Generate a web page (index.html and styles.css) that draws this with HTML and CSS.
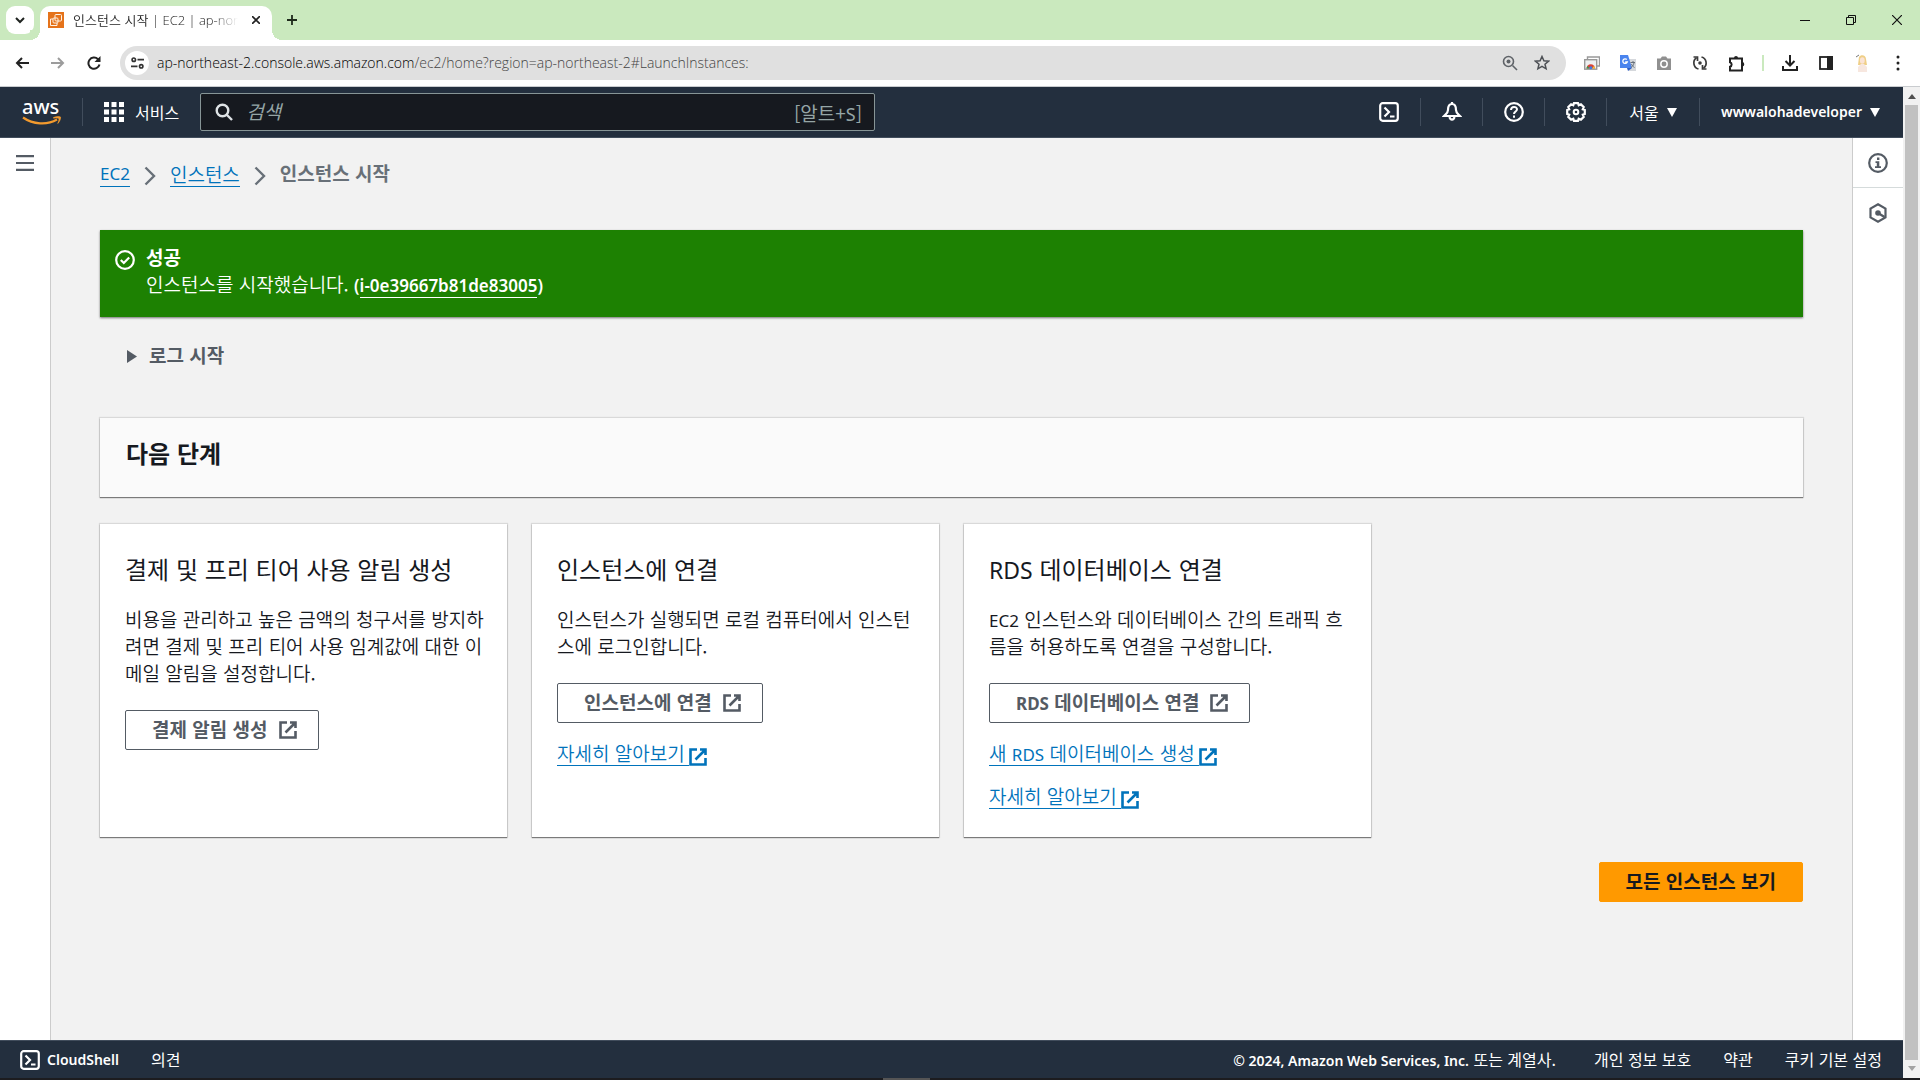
FILE: index.html
```html
<!DOCTYPE html>
<html lang="ko">
<head>
<meta charset="utf-8">
<meta name="viewport" content="width=device-width, initial-scale=1">
<title>인스턴스 시작 | EC2 | ap-northeast-2</title>
<link rel="stylesheet" href="styles.css">
</head>
<body>
<svg class="defs" width="0" height="0" aria-hidden="true">
  <symbol id="i-external" viewBox="0 0 18 18"><path d="M8 1.500H1.500v15h15V10M11 1.500h5.500V7M16 2L6.500 11.500" fill="none" stroke="currentColor" stroke-width="2.600"/></symbol>
  <symbol id="i-shell" viewBox="0 0 20 20"><rect x="1.200" y="1.200" width="17.600" height="17.600" rx="2.500" fill="none" stroke="currentColor" stroke-width="2.200"/><path d="M5.500 5.500L10 10l-4.500 4.500M11 14.500h4.500" fill="none" stroke="currentColor" stroke-width="2.200"/></symbol>
  <symbol id="i-chevron" viewBox="0 0 12 20"><path d="M1.500 1.500L10 10l-8.500 8.500" fill="none" stroke="currentColor" stroke-width="2.400"/></symbol>
  <symbol id="i-caret" viewBox="0 0 10 9"><path d="M0 0h10L5 9z" fill="currentColor"/></symbol>
</svg>

<header class="tabstrip">
  <button class="tab-search" aria-label="탭 검색"><svg width="10" height="7" viewBox="0 0 10 7"><path d="M1 1l4 4 4-4" fill="none" stroke="#1f2420" stroke-width="2"/></svg></button>
  <div class="tab">
    <svg class="favicon" width="16" height="16" viewBox="0 0 16 16"><rect width="16" height="16" fill="#e5731b"/><g fill="none" stroke="#fff3e6" stroke-width="1"><path d="M5 7H2.500v6.500H9V11"/><rect x="7" y="2.500" width="6.500" height="6.500" rx="1"/><rect x="5" y="6" width="5" height="5" rx="1"/></g></svg>
    <span class="tab-title">인스턴스 시작 <span class="tab-latin">| EC2 | ap-northeast-2</span></span>
    <button class="tab-close" aria-label="탭 닫기"><svg width="8" height="8" viewBox="0 0 8 8"><path d="M0 0l8 8M8 0L0 8" stroke="#222" stroke-width="1.600"/></svg></button>
  </div>
  <button class="tab-new" aria-label="새 탭"><svg width="10" height="10" viewBox="0 0 10 10"><path d="M5 0v10M0 5h10" stroke="#1f2b1c" stroke-width="1.800"/></svg></button>
  <div class="window-controls">
    <button aria-label="최소화"><svg width="10" height="10" viewBox="0 0 10 10"><path d="M0 5.500h10" stroke="#111"/></svg></button>
    <button aria-label="이전 크기로"><svg width="10" height="10" viewBox="0 0 10 10"><path d="M.5 2.500h7v7h-7zM2.500 2V.5h7v7H8" fill="none" stroke="#111"/></svg></button>
    <button aria-label="닫기"><svg width="10" height="10" viewBox="0 0 10 10"><path d="M0 0l10 10M10 0L0 10" stroke="#111" stroke-width="1.200"/></svg></button>
  </div>
</header>

<div class="toolbar">
  <div class="history">
    <button aria-label="뒤로"><svg width="14" height="12" viewBox="0 0 14 12"><path d="M14 6H2M7 1L2 6l5 5" fill="none" stroke="#222" stroke-width="2"/></svg></button>
    <button aria-label="앞으로"><svg width="14" height="12" viewBox="0 0 14 12"><path d="M0 6h12M7 1l5 5-5 5" fill="none" stroke="#9c9c9c" stroke-width="2"/></svg></button>
    <button aria-label="새로고침"><svg width="14" height="14" viewBox="0 0 14 14"><path d="M12.500 8.500A5.600 5.600 0 1 1 11 3.200L12.500 5" fill="none" stroke="#222" stroke-width="2"/><path d="M13.500 0v6h-6z" fill="#222"/></svg></button>
  </div>
  <div class="omnibox">
    <button class="site-info" aria-label="사이트 정보"><svg width="13" height="12" viewBox="0 0 13 12"><g fill="none" stroke="#333" stroke-width="1.700"><circle cx="2.800" cy="2.700" r="1.700"/><path d="M6.500 2.700H13M0 9.300h6.500"/><circle cx="10.200" cy="9.300" r="1.700"/></g></svg></button>
    <div class="url"><span class="host">ap-northeast-2.console.aws.amazon.com</span>/ec2/home?region=ap-northeast-2#LaunchInstances:</div>
    <button aria-label="확대/축소"><svg width="16" height="16" viewBox="0 0 16 16"><g fill="none" stroke="#5f6368" stroke-width="1.600"><circle cx="6.500" cy="6.500" r="5"/><path d="M10.500 10.500L15 15"/></g><circle cx="6.500" cy="6.500" r="2" fill="#5f6368"/></svg></button>
    <button aria-label="북마크"><svg width="16" height="16" viewBox="0 0 16 16"><path d="M8 1.500l1.900 4.300 4.700.4-3.600 3 1.100 4.600L8 11.400l-4.100 2.400L5 9.200l-3.600-3 4.700-.4z" fill="none" stroke="#4d5055" stroke-width="1.500"/></svg></button>
  </div>
  <div class="extensions">
    <button aria-label="스크린샷"><svg width="16" height="16" viewBox="0 0 16 16"><path d="M3.500 4V2h12v9H13" fill="none" stroke="#999" stroke-width="1.400"/><rect x=".7" y="4.700" width="12" height="9.500" fill="#eef0f1" stroke="#999" stroke-width="1.400"/><path d="M2.500 13.500a4.200 4.200 0 0 1 8.500 0z" fill="#d94436"/><path d="M2.500 13.500a4 4 0 0 1 1-2.500l2 2.500z" fill="#2f9e52"/><path d="M11 13.500a4 4 0 0 0-1-2.500l-2 2.500z" fill="#f4c430"/><circle cx="6.800" cy="12.700" r="1.500" fill="#3d7de4"/></svg></button>
    <button aria-label="번역"><svg width="16" height="16" viewBox="0 0 16 16"><path d="M6 4h10v12H9z" fill="#d5d8dc"/><path d="M0 0h8l4 13H0z" fill="#4a84ee"/><path d="M8 16l4-3H7z" fill="#2f5ec4"/><path d="M6.800 4.500A2.300 2.300 0 1 0 7.300 7H5.200" fill="none" stroke="#fff" stroke-width="1.300"/><path d="M10.500 7.500H15M13 6v1.500M14 8c-.5 2.500-1.500 3.500-3 4.500M11.500 9c.5 1.500 1.500 2.500 3 3.500" fill="none" stroke="#69717b" stroke-width="1"/></svg></button>
    <button aria-label="카메라"><svg width="16" height="14" viewBox="0 0 16 14"><path d="M1 2.500h3.500L6 .5h4l1.500 2H15V14H1z" fill="#909090"/><circle cx="8" cy="8" r="3.200" fill="#909090" stroke="#fff" stroke-width="1.500"/></svg></button>
    <button aria-label="동기화"><svg width="16" height="16" viewBox="0 0 16 16"><g fill="none" stroke="#3b3b3b" stroke-width="1.700"><path d="M6.500 14A6.300 6.300 0 0 1 4.500 2.800M9.500 2A6.300 6.300 0 0 1 11.500 13.200"/><path d="M1.500 2h4v4M14.500 14h-4v-4"/></g><circle cx="8" cy="8" r="1.800" fill="#3b3b3b"/></svg></button>
    <button aria-label="확장 프로그램"><svg width="17" height="17" viewBox="0 0 17 17"><path d="M2 3.500h12v12H2v-3.800a2.300 2.300 0 0 0 0-4.400z" fill="none" stroke="#222" stroke-width="2"/><path d="M6 3a2 2 0 0 1 4 0zM14 7a2.300 2.300 0 0 1 0 4.600z" fill="#222"/></svg></button>
    <span class="ext-divider"></span>
    <button aria-label="다운로드"><svg width="16" height="16" viewBox="0 0 16 16"><path d="M8 0v10M3.500 6L8 10.500 12.500 6M1 11v4h14v-4" fill="none" stroke="#222" stroke-width="2"/></svg></button>
    <button aria-label="측면 패널"><svg width="14" height="14" viewBox="0 0 14 14"><rect x="1" y="1" width="12" height="12" fill="none" stroke="#222" stroke-width="1.800"/><path d="M8 0h6v14H8z" fill="#222"/></svg></button>
    <button aria-label="프로필"><svg width="14" height="18" viewBox="0 0 14 18"><path d="M4 3c2-3 7-2 7 2l1 6H3z" fill="#efcf87"/><ellipse cx="7.300" cy="6.500" rx="2.400" ry="3.200" fill="#fbe3d4"/><path d="M3 18v-5l3-3h3l3 3v5z" fill="#f7e7df"/><path d="M1 3l3-2" stroke="#777"/></svg></button>
    <button aria-label="메뉴"><svg width="4" height="16" viewBox="0 0 4 16"><g fill="#222"><circle cx="2" cy="2" r="1.500"/><circle cx="2" cy="8" r="1.500"/><circle cx="2" cy="14" r="1.500"/></g></svg></button>
  </div>
</div>

<div class="viewport">
  <div class="page">
    <nav class="aws-nav">
      <a class="logo" href="#">
        <span>aws</span>
        <svg width="40" height="10" viewBox="0 0 40 10"><path d="M1 1.500C11 8.500 25 9.500 35 3.500" fill="none" stroke="#f29a2e" stroke-width="2.200"/><path d="M31.500 1.500c3-1.300 6.500-1.200 7-.5s-.5 4.500-2.700 6.500c1-2.500 1.500-4.500 1-5s-3-.7-5.300-.3z" fill="#f29a2e" stroke="#f29a2e" stroke-width=".6"/></svg>
      </a>
      <button class="services">
        <svg width="20" height="20" viewBox="0 0 20 20"><path d="M0 0h5v5H0zM7.500 0h5v5h-5zM15 0h5v5h-5zM0 7.500h5v5H0zM7.500 7.500h5v5h-5zM15 7.500h5v5h-5zM0 15h5v5H0zM7.500 15h5v5h-5zM15 15h5v5h-5z" fill="#fff"/></svg>
        서비스
      </button>
      <label class="search">
        <svg width="18" height="18" viewBox="0 0 18 18"><g fill="none" stroke="#dfe3e6" stroke-width="2.400"><circle cx="7.500" cy="7.500" r="5.800"/><path d="M11.500 11.500L17 17"/></g></svg>
        <input type="search" placeholder="검색" aria-label="검색">
        <span class="shortcut">[알트+<span class="en">S</span>]</span>
      </label>
      <div class="nav-tools">
        <button class="tool" aria-label="CloudShell"><svg width="20" height="20"><use href="#i-shell"/></svg></button>
        <button class="tool" aria-label="알림"><svg width="20" height="20" viewBox="0 0 20 20"><path d="M10 2C7 2 6 4.500 6 8c0 3-2 4-4 6h16c-2-2-4-3-4-6 0-3.500-1-6-4-6z" fill="none" stroke="#fff" stroke-width="2.200"/><path d="M10 0v3M7.500 15a2.600 3.500 0 0 0 5 0" fill="none" stroke="#fff" stroke-width="2.200"/></svg></button>
        <button class="tool" aria-label="지원"><svg width="20" height="20" viewBox="0 0 20 20"><circle cx="10" cy="10" r="8.800" fill="none" stroke="#fff" stroke-width="2.200"/><path d="M7 8c0-4 6-4 6-.7C13 9.500 10 9.500 10 12" fill="none" stroke="#fff" stroke-width="2"/><path d="M9 13.500h2v2.200H9z" fill="#fff"/></svg></button>
        <button class="tool" aria-label="설정"><svg width="20" height="20" viewBox="0 0 20 20"><path d="M8 1.200h4l.7 2 2.200-.9 2.800 2.800-.9 2.200 2 .7v4l-2 .7.900 2.200-2.800 2.800-2.200-.9-.7 2H8l-.7-2-2.200.9-2.800-2.800.9-2.200-2-.7V8l2-.7-.9-2.200 2.800-2.800 2.200.9z" fill="none" stroke="#fff" stroke-width="2.200"/><circle cx="10" cy="10" r="2.300" fill="none" stroke="#fff" stroke-width="2"/></svg></button>
        <button class="tool region">서울 <svg width="10" height="9"><use href="#i-caret"/></svg></button>
        <button class="tool account"><span class="en">wwwalohadeveloper</span> <svg width="10" height="9"><use href="#i-caret"/></svg></button>
      </div>
    </nav>

    <div class="body-row">
      <aside class="side-left">
        <button aria-label="탐색 열기"><svg width="18" height="16" viewBox="0 0 18 16"><path d="M0 1.200h18M0 8h18M0 14.800h18" stroke="#545b64" stroke-width="2.200"/></svg></button>
      </aside>

      <main class="content">
        <nav class="breadcrumb" aria-label="이동 경로">
          <a class="en" href="#">EC2</a>
          <svg width="12" height="20"><use href="#i-chevron"/></svg>
          <a href="#">인스턴스</a>
          <svg width="12" height="20"><use href="#i-chevron"/></svg>
          <span class="label">인스턴스 시작</span>
        </nav>

        <section class="flash">
          <svg width="20" height="20" viewBox="0 0 20 20"><g fill="none" stroke="#fff" stroke-width="2.200"><circle cx="10" cy="10" r="8.800"/><path d="M5.800 10l3 3 5.400-5.500"/></g></svg>
          <div>
            <strong>성공</strong>
            <p>인스턴스를 시작했습니다. <span class="en">(<a href="#">i-0e39667b81de83005</a>)</span></p>
          </div>
        </section>

        <button class="log-toggle"><svg width="10" height="13" viewBox="0 0 10 13"><path d="M0 0l10 6.500L0 13z" fill="#545b64"/></svg><span class="label">로그 시작</span></button>

        <section class="panel"><h1>다음 단계</h1></section>

        <div class="cards">
          <article class="card">
            <h2>결제 및 프리 티어 사용 알림 생성</h2>
            <p>비용을 관리하고 높은 금액의 청구서를 방지하려면 결제 및 프리 티어 사용 임계값에 대한 이메일 알림을 설정합니다.</p>
            <button class="btn"><span class="label">결제 알림 생성</span><svg width="18" height="18"><use href="#i-external"/></svg></button>
          </article>
          <article class="card">
            <h2>인스턴스에 연결</h2>
            <p>인스턴스가 실행되면 로컬 컴퓨터에서 인스턴스에 로그인합니다.</p>
            <button class="btn"><span class="label">인스턴스에 연결</span><svg width="18" height="18"><use href="#i-external"/></svg></button>
            <a class="more" href="#"><span>자세히 알아보기</span><svg width="18" height="18"><use href="#i-external"/></svg></a>
          </article>
          <article class="card">
            <h2><span class="en">RDS</span> 데이터베이스 연결</h2>
            <p><span class="en">EC2</span> 인스턴스와 데이터베이스 간의 트래픽 흐름을 허용하도록 연결을 구성합니다.</p>
            <button class="btn"><span class="label"><span class="en">RDS</span> 데이터베이스 연결</span><svg width="18" height="18"><use href="#i-external"/></svg></button>
            <a class="more" href="#"><span>새 <span class="en">RDS</span> 데이터베이스 생성</span><svg width="18" height="18"><use href="#i-external"/></svg></a>
            <a class="more" href="#"><span>자세히 알아보기</span><svg width="18" height="18"><use href="#i-external"/></svg></a>
          </article>
        </div>

        <div class="actions"><button class="btn primary"><span class="label">모든 인스턴스 보기</span></button></div>
      </main>

      <aside class="side-right">
        <button aria-label="정보"><svg width="20" height="20" viewBox="0 0 20 20"><circle cx="10" cy="10" r="8.800" fill="none" stroke="#545b64" stroke-width="2.200"/><path d="M9 4.500h2.400v2.400H9zM7.500 8.300h3.800v5H13V15H7v-1.700h1.800V10H7.500z" fill="#545b64"/></svg></button>
        <button aria-label="자습서"><svg width="20" height="20" viewBox="0 0 20 20"><path d="M10 1.300l7.500 4.300v8.800L10 18.700l-7.500-4.300V5.600z" fill="none" stroke="#545b64" stroke-width="2.200"/><circle cx="10" cy="10" r="2.800" fill="#545b64"/><path d="M10 10l6.500 4" stroke="#545b64" stroke-width="2.400"/></svg></button>
      </aside>
    </div>

    <footer class="footer">
      <a class="en shell" href="#"><svg width="20" height="20"><use href="#i-shell"/></svg>CloudShell</a>
      <a href="#">의견</a>
      <span class="copyright"><span class="en">© 2024, Amazon Web Services, Inc.</span> 또는 계열사.</span>
      <a href="#">개인 정보 보호</a>
      <a href="#">약관</a>
      <a href="#">쿠키 기본 설정</a>
    </footer>
  </div>
  <div class="scrollbar" aria-hidden="true">
    <svg width="8" height="5" viewBox="0 0 8 5"><path d="M0 5h8L4 0z" fill="#505050"/></svg>
    <div class="thumb"></div>
    <svg width="8" height="5" viewBox="0 0 8 5"><path d="M0 0h8L4 5z" fill="#a3a3a3"/></svg>
  </div>
</div>
<div class="taskbar"><span></span></div>
</body>
</html>
```
FILE: styles.css
```css
* { box-sizing: border-box; }

body {
  margin: 0;
  min-height: 100vh;
  display: flex;
  flex-direction: column;
  background: #f2f2f2;
  color: #16191f;
  font-family: "Noto Sans CJK KR", sans-serif;
  font-size: 19px;
  font-weight: 350;
  line-height: 27px;
}

button, input {
  margin: 0;
  padding: 0;
  border: 0;
  background: none;
  color: inherit;
  font: inherit;
}
h1, h2, p { margin: 0; }
a { color: #0073bb; text-decoration: none; }
svg { display: block; flex: none; }
.defs { position: absolute; }
.en { font-family: "Noto Sans", sans-serif; font-size: 17px; font-weight: 400; line-height: 20px; }

/* Browser tabs */
.tabstrip {
  display: flex;
  height: 40px;
  padding-left: 6px;
  background: #cae9be;
}
.tabstrip button { display: flex; align-items: center; justify-content: center; }
.tab-search {
  width: 28px;
  height: 28px;
  margin: 6px 6px 0 0;
  border-radius: 9px;
  background: #fff;
}
.tab {
  position: relative;
  display: flex;
  align-items: center;
  width: 232px;
  height: 34px;
  margin-top: 6px;
  padding: 0 8px 6px;
  border-radius: 10px 10px 0 0;
  background: #fff;
}
.tab::before, .tab::after {
  content: "";
  position: absolute;
  bottom: 0;
  width: 10px;
  height: 10px;
}
.tab::before { right: 100%; background: radial-gradient(circle at 0 0, #cae9be 10px, #fff 10px); }
.tab::after { left: 100%; background: radial-gradient(circle at 100% 0, #cae9be 10px, #fff 10px); }
.tab-title {
  flex: 1;
  margin-left: 9px;
  overflow: hidden;
  white-space: nowrap;
  color: #222;
  font-size: 13px;
  line-height: 20px;
  -webkit-mask-image: linear-gradient(90deg, #000 85%, transparent);
  mask-image: linear-gradient(90deg, #000 85%, transparent);
}
.tab-latin { font-family: "Open Sans", sans-serif; font-weight: 300; }
.tab-close { width: 16px; height: 16px; margin-left: 10px; }
.tab-new { width: 28px; height: 28px; margin: 6px 0 0 6px; }
.window-controls { display: flex; margin-left: auto; }
.window-controls button { width: 46px; height: 40px; }

/* Browser toolbar */
.toolbar {
  display: flex;
  align-items: center;
  height: 47px;
  padding-left: 4px;
  border-bottom: 1px solid #c9cccf;
  background: #fff;
}
.toolbar button {
  display: flex;
  align-items: center;
  justify-content: center;
  width: 36px;
  height: 34px;
}
.history { display: flex; margin-right: 8px; }
.omnibox {
  flex: 1;
  display: flex;
  align-items: center;
  height: 34px;
  padding: 0 8px 0 5px;
  border-radius: 17px;
  background: #e0e0e0;
}
.omnibox button { width: 32px; }
.omnibox .site-info { width: 24px; height: 24px; border-radius: 50%; background: #fff; }
.url {
  flex: 1;
  margin-left: 8px;
  color: #444;
  font-family: "Open Sans", sans-serif;
  font-size: 14px;
  font-weight: 300;
  line-height: 20px;
}
.host { color: #000; }
.extensions { display: flex; align-items: center; margin-left: 8px; padding-right: 4px; }
.ext-divider { width: 2px; height: 16px; margin: 0 8px; background: #cae9be; }

/* Page frame */
.viewport { flex: 1; display: flex; }
.page { flex: 1; display: flex; flex-direction: column; min-width: 0; }
.body-row { flex: 1; display: flex; }

.aws-nav {
  display: flex;
  align-items: center;
  height: 51px;
  border-bottom: 1px solid #414d5c;
  background: #232f3e;
  color: #fff;
  font-size: 16px;
  font-weight: 400;
}
.aws-nav .en, .footer .en { font-size: 14px; font-weight: 600; }
.logo {
  width: 61px;
  margin-left: 22px;
  border-right: 1px solid #414d5c;
  color: #fff;
  font-family: "Noto Sans", sans-serif;
  font-size: 20px;
  font-weight: 500;
  line-height: 18px;
}
.logo span { display: block; }
.services { display: flex; align-items: center; gap: 11px; margin: 0 21px; }
.search {
  display: flex;
  align-items: center;
  width: 675px;
  height: 38px;
  padding: 0 12px 0 14px;
  border: 1px solid #879596;
  border-radius: 2px;
  background: #16191f;
  color: #95a5a6;
  font-size: 19px;
}
.search input { flex: 1; min-width: 0; margin-left: 13px; padding-bottom: 3px; outline: 0; }
.search input::placeholder { color: #95a5a6; font-style: italic; opacity: 1; }
.search .en { font-size: 18px; font-weight: 400; }
.nav-tools { display: flex; margin-left: auto; }
.tool {
  display: flex;
  align-items: center;
  justify-content: center;
  gap: 8px;
  width: 62px;
  height: 28px;
  border-left: 1px solid #414d5c;
}
.tool:first-child { border-left: 0; }
.region { width: 93px; }
.account { width: 204px; padding-right: 2px; }

.side-left {
  display: flex;
  align-items: flex-start;
  width: 51px;
  padding: 17px 0 0 16px;
  border-right: 1px solid #ccc;
  background: #fff;
}
.side-right { width: 51px; border-left: 1px solid #ccc; background: #fff; }
.side-right button {
  display: flex;
  align-items: center;
  justify-content: center;
  width: 50px;
  height: 50px;
}
.side-right button:first-child { border-bottom: 1px solid #d5dbdb; }

/* Main content */
.content { flex: 1; padding: 22px 49px 0; min-width: 0; }
.label, .label .en, h1, .flash strong { font-weight: 700; }
.label { padding-bottom: 4px; }
.breadcrumb { display: flex; align-items: center; height: 28px; color: #687078; }
.breadcrumb svg { margin: 4px 14px 0; }
.breadcrumb a { line-height: 24px; border-bottom: 1px solid #0073bb; }

.flash {
  display: flex;
  gap: 11px;
  margin-top: 42px;
  padding: 13px 15px 20px;
  background: #1d8102;
  box-shadow: 0 1px 2px #00000088;
  color: #fff;
}
.flash svg { margin-top: 7px; }
.flash strong { display: block; }
.flash .en { font-weight: 600; }
.flash a { color: #fff; border-bottom: 1px solid #fff; }

.log-toggle {
  display: flex;
  align-items: center;
  gap: 12px;
  height: 32px;
  margin: 23px 0 0 27px;
  color: #545b64;
}

.panel, .card { box-shadow: 0 1px 1px #00000070, 0 0 1px 1px #0000001a; }
.panel { margin-top: 46px; padding: 20px 26px 29px; background: #fafafa; }
h1, h2 { font-size: 24px; line-height: 30px; }
h2 { font-weight: 400; }
h2 .en { font-size: 23px; }

.cards { display: grid; grid-template-columns: repeat(4, 1fr); gap: 25px; margin-top: 27px; }
.card {
  display: flex;
  flex-direction: column;
  align-items: flex-start;
  padding: 30px 20px 28px 25px;
  background: #fff;
}
.card p { margin: 21px 0 24px; }
.btn {
  display: flex;
  align-items: center;
  gap: 11px;
  height: 40px;
  padding: 0 21px 0 26px;
  border: 1px solid #545b64;
  border-radius: 2px;
  background: #fff;
  color: #545b64;
}
.btn.primary { padding: 0 26px; border-color: #f90; background: #f90; color: #16191f; }
.more { display: flex; align-items: flex-end; margin-top: 18px; line-height: 24px; }
.more > span { padding-right: 4px; border-bottom: 1px solid #0073bb; }
.actions { display: flex; justify-content: flex-end; margin: 25px 0; }

/* Footer */
.footer {
  display: flex;
  align-items: center;
  gap: 32px;
  height: 38px;
  padding: 0 21px 0 20px;
  border-top: 1px solid #414d5c;
  background: #232f3e;
  color: #fff;
  font-size: 16px;
  font-weight: 400;
}
.footer a { color: #fff; }
.shell { display: flex; align-items: center; gap: 7px; }
.copyright { margin-left: auto; margin-right: 6px; }

.scrollbar {
  display: flex;
  flex-direction: column;
  align-items: center;
  width: 17px;
  padding: 7px 0;
  background: #f1f1f1;
}
.thumb { flex: 1; width: 13px; margin: 6px 0; background: #c1c1c1; }
.taskbar { display: flex; justify-content: center; height: 2px; background: #1c1c1f; }
.taskbar span { width: 47px; margin-right: 107px; background: #555; }
```
